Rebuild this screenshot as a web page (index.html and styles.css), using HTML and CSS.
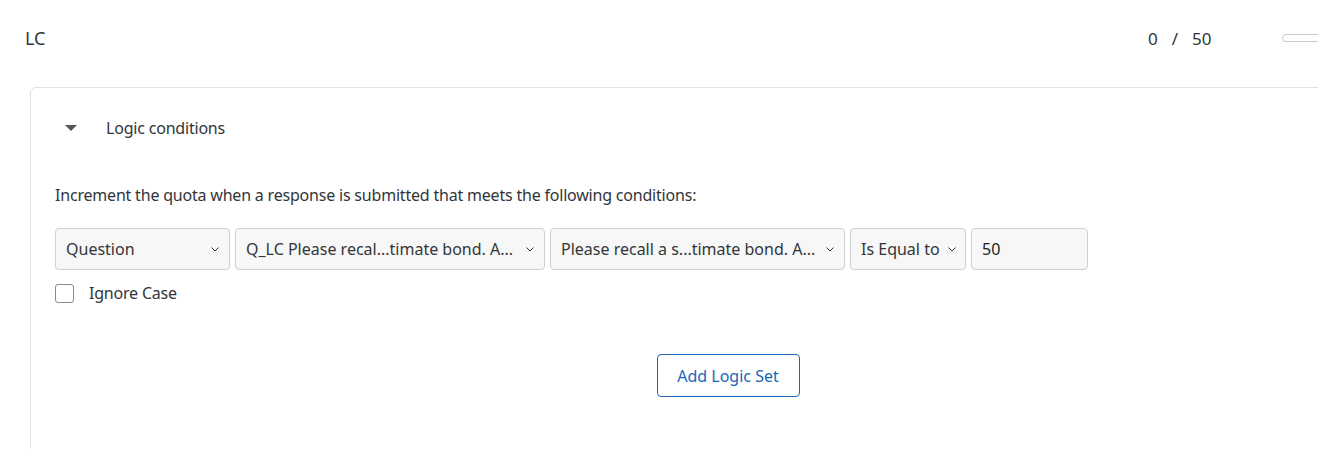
FILE: index.html
```html
<!DOCTYPE html>
<html>
<head>
<meta charset="utf-8">
<link rel="stylesheet" href="styles.css">
</head>
<body>
<div class="page">
  <header class="quota-head">
    <div class="quota-name">LC</div>
    <div class="quota-count"><span>0</span><span class="slash">/</span><span>50</span></div>
    <div class="progress"></div>
  </header>
  <section class="card">
    <div class="section-title">
      <span class="caret"></span>
      <span>Logic conditions</span>
    </div>
    <p class="desc">Increment the quota when a response is submitted that meets the following conditions:</p>
    <div class="cond-row">
      <div class="select s1"><span class="val">Question</span><svg class="chev" viewBox="0 0 8 5"><path d="M0.5 0.5 L4 4 L7.5 0.5" fill="none" stroke="#333" stroke-width="1"/></svg></div>
      <div class="select s2"><span class="val">Q_LC Please recal...timate bond. A...</span><svg class="chev" viewBox="0 0 8 5"><path d="M0.5 0.5 L4 4 L7.5 0.5" fill="none" stroke="#333" stroke-width="1"/></svg></div>
      <div class="select s3"><span class="val">Please recall a s...timate bond. A...</span><svg class="chev" viewBox="0 0 8 5"><path d="M0.5 0.5 L4 4 L7.5 0.5" fill="none" stroke="#333" stroke-width="1"/></svg></div>
      <div class="select s4"><span class="val">Is Equal to</span><svg class="chev" viewBox="0 0 8 5"><path d="M0.5 0.5 L4 4 L7.5 0.5" fill="none" stroke="#333" stroke-width="1"/></svg></div>
      <div class="input">50</div>
    </div>
    <label class="check-row"><span class="box"></span><span>Ignore Case</span></label>
    <div class="btn-row"><button class="btn">Add Logic Set</button></div>
  </section>
</div>
</body>
</html>
```

FILE: styles.css
```css
* { box-sizing: border-box; }
html, body { margin: 0; padding: 0; background: #fff; }
body {
  font-family: "Noto Sans", "Open Sans", sans-serif;
  font-size: 16px;
  letter-spacing: -0.2px;
  color: #32363a;
  overflow: hidden;
  width: 1318px;
  height: 449px;
}
.quota-head {
  display: flex;
  align-items: center;
  height: 76px;
  padding-left: 25px;
  font-size: 17px;
  letter-spacing: 0;
}
.quota-name { flex: 1; font-size: 18px; }
.quota-count {
  display: flex;
  gap: 14px;
  width: 134px;
}
.progress {
  width: 60px;
  height: 8px;
  border: 1px solid #c8c8c8;
  border-radius: 4px;
  margin-right: -24px;
}
.card {
  margin-top: 11px;
  margin-left: 30px;
  margin-right: -20px;
  height: 400px;
  border: 1px solid #e2e2e2;
  border-radius: 6px;
  padding: 0 0 0 24px;
}
.section-title {
  display: flex;
  align-items: center;
  height: 80px;
  padding-left: 10px;
  gap: 29px;
}
.caret {
  width: 0; height: 0;
  border-left: 6px solid transparent;
  border-right: 6px solid transparent;
  border-top: 6px solid #555;
}
.desc { margin: 0; line-height: 22px; padding-top: 16px; }
.cond-row {
  display: flex;
  gap: 5px;
  margin-top: 22px;
}
.select, .input {
  height: 42px;
  background: #f7f7f7;
  border: 1px solid #d0d0d0;
  border-radius: 4px;
  display: flex;
  align-items: center;
  padding: 0 10px;
  color: #32363a;
  letter-spacing: 0;
}
.select { justify-content: space-between; }
.val { white-space: nowrap; }
.chev { width: 8px; height: 5px; flex: none; margin-left: 8px; }
.s1 { width: 175px; }
.s2 { width: 310px; }
.s3 { width: 295px; }
.s4 { width: 116px; }
.input { width: 117px; color: #222; }
.check-row {
  display: flex;
  align-items: center;
  gap: 15px;
  margin-top: 14px;
  height: 18px;
}
.box {
  width: 19px; height: 19px;
  border: 1.5px solid #8a8a8a;
  border-radius: 3px;
  background: #fff;
}
.btn-row {
  display: flex;
  justify-content: center;
  width: 1346px;
  margin-top: 52px;
}
.btn {
  width: 143px;
  height: 43px;
  background: #fff;
  border: 1px solid #1a66b8;
  border-radius: 4px;
  color: #1a66b8;
  font-family: inherit;
  font-size: 16px;
  padding: 0;
}
```
